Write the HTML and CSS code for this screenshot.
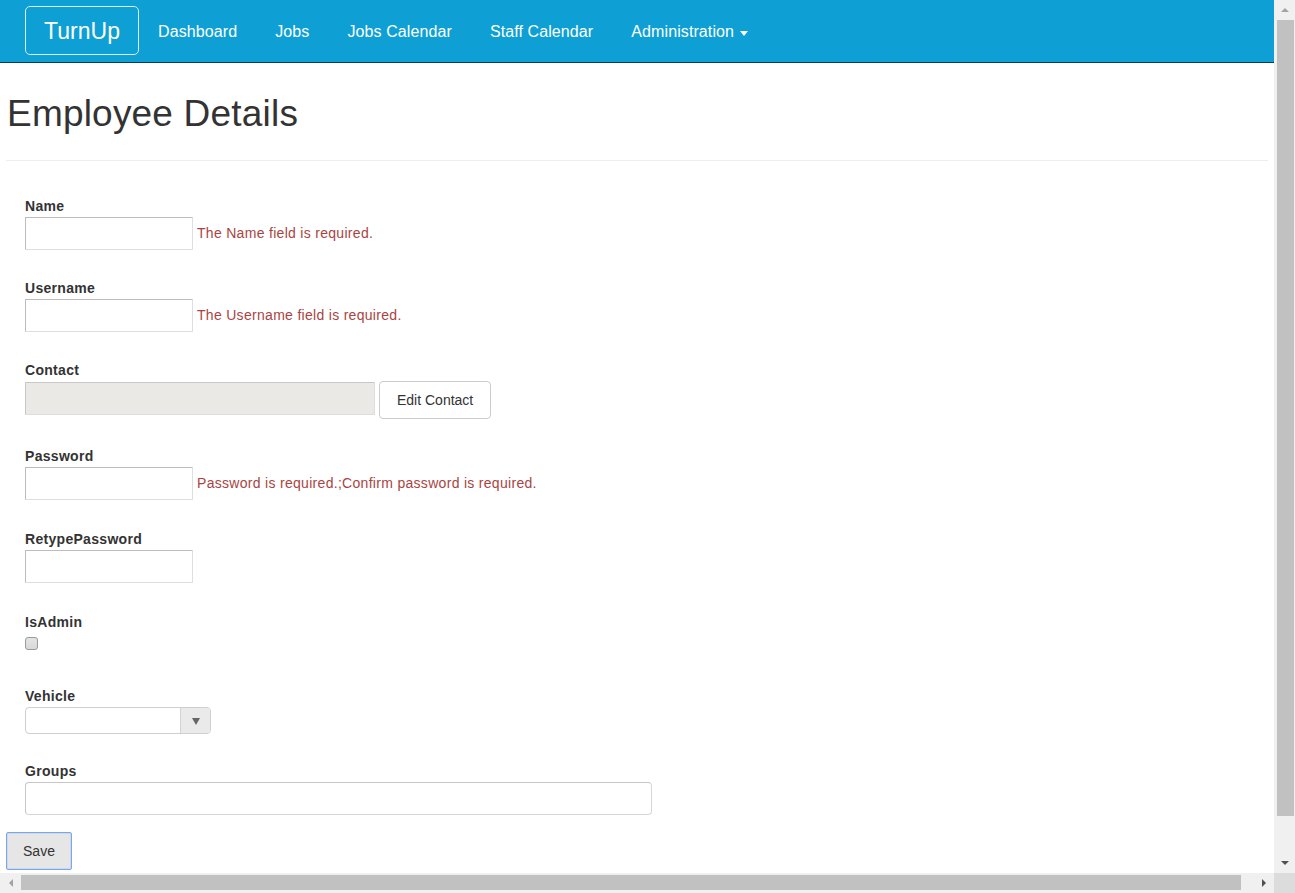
FILE: index.html
```html
<!DOCTYPE html>
<html lang="en">
<head>
<meta charset="utf-8">
<title>Employee Details - TurnUp</title>
<link rel="stylesheet" href="styles.css">
</head>
<body>
<div class="window">
  <div class="viewport">
    <nav class="navbar">
      <a class="brand" href="#">TurnUp</a>
      <ul class="nav-links">
        <li><a href="#">Dashboard</a></li>
        <li><a href="#">Jobs</a></li>
        <li><a href="#">Jobs Calendar</a></li>
        <li><a href="#">Staff Calendar</a></li>
        <li><a href="#">Administration <span class="caret"></span></a></li>
      </ul>
    </nav>
    <main class="container">
      <h1 class="title">Employee Details</h1>
      <hr class="rule">
      <form class="form">
        <div class="group">
          <label class="label">Name</label>
          <div class="field">
            <input class="input input-short" type="text">
            <span class="error">The Name field is required.</span>
          </div>
        </div>
        <div class="group">
          <label class="label">Username</label>
          <div class="field">
            <input class="input input-short" type="text">
            <span class="error">The Username field is required.</span>
          </div>
        </div>
        <div class="group group-contact">
          <label class="label">Contact</label>
          <div class="field field-top">
            <input class="input input-contact" type="text" disabled>
            <button class="btn-edit" type="button">Edit Contact</button>
          </div>
        </div>
        <div class="group group-wide">
          <label class="label">Password</label>
          <div class="field">
            <input class="input input-short" type="password">
            <span class="error">Password is required.;Confirm password is required.</span>
          </div>
        </div>
        <div class="group group-wide">
          <label class="label">RetypePassword</label>
          <div class="field">
            <input class="input input-short" type="password">
          </div>
        </div>
        <div class="group group-check">
          <label class="label">IsAdmin</label>
          <div class="field">
            <input class="checkbox" type="checkbox">
          </div>
        </div>
        <div class="group group-vehicle">
          <label class="label">Vehicle</label>
          <div class="select">
            <span class="select-value"></span>
            <span class="select-arrow"><span class="tri-down"></span></span>
          </div>
        </div>
        <div class="group group-last">
          <label class="label">Groups</label>
          <div class="field">
            <input class="input input-groups" type="text">
          </div>
        </div>
      </form>
      <button class="btn-save" type="button">Save</button>
    </main>
  </div>
  <div class="vscroll">
    <div class="sb-btn"><span class="arr arr-up"></span></div>
    <div class="vthumb-track"><div class="vthumb"></div></div>
    <div class="sb-btn"><span class="arr arr-down"></span></div>
  </div>
  <div class="hscroll">
    <div class="sb-btn-h"><span class="arr arr-left"></span></div>
    <div class="hthumb-track"><div class="hthumb"></div></div>
    <div class="sb-btn-h"><span class="arr arr-right"></span></div>
  </div>
  <div class="corner"></div>
</div>
</body>
</html>
```
FILE: styles.css
```css
* { box-sizing: border-box; }
html, body { margin: 0; padding: 0; height: 100%; }
body {
  font-family: "Liberation Sans", Arial, Helvetica, sans-serif;
  font-size: 14px;
  letter-spacing: 0.3px;
  color: #333;
  background: #fff;
}
.window {
  display: grid;
  grid-template-columns: 1fr 21px;
  grid-template-rows: 1fr 20px;
  height: 100vh;
  overflow: hidden;
}
.viewport {
  overflow: hidden;
  background: #fff;
}

/* navbar */
.navbar {
  display: flex;
  align-items: center;
  height: 63px;
  padding-left: 25px;
  background: #0e9fd4;
  border-bottom: 1px solid #073e57;
}
.brand {
  display: flex;
  align-items: center;
  justify-content: center;
  width: 114px;
  height: 49px;
  margin-top: -1px;
  padding-top: 2px;
  border: 1px solid #d8eef8;
  border-radius: 5px;
  color: #fff;
  font-size: 23px;
  letter-spacing: 0;
  text-decoration: none;
}
.nav-links {
  display: flex;
  list-style: none;
  margin: 0;
  padding: 0;
}
.nav-links a {
  display: flex;
  align-items: center;
  padding: 2px 19px 0;
  color: #fff;
  font-size: 16px;
  letter-spacing: 0.1px;
  text-decoration: none;
}
.caret {
  display: inline-block;
  width: 0;
  height: 0;
  margin-left: 6px;
  margin-top: 2px;
  border-left: 4.5px solid transparent;
  border-right: 4.5px solid transparent;
  border-top: 5px solid #fff;
}

/* content */
.container { padding: 0 6px; }
.title {
  margin: 31px 0 0;
  font-size: 37px;
  font-weight: 400;
  line-height: 1.1;
  letter-spacing: 0.2px;
  color: #333;
  padding-left: 1px;
}
.rule {
  margin: 25px 0 0;
  border: 0;
  border-top: 1px solid #eee;
}
.form {
  padding: 35px 0 0 19px;
}
.group { margin-bottom: 28px; }
.group-contact { margin-bottom: 27px; }
.group-wide { margin-bottom: 29px; }
.group-check { margin-bottom: 36px; }
.group-vehicle { margin-bottom: 27px; }
.group-last { margin-bottom: 17px; }
.label {
  display: block;
  font-weight: 700;
  line-height: 20px;
  margin-bottom: 1px;
}
.field {
  display: flex;
  align-items: center;
  gap: 4px;
}
.field-top { align-items: flex-start; }
.input {
  height: 33px;
  padding: 4px 8px;
  font: inherit;
  border: 1px solid;
  border-color: #bcbcbc #dedede #dedede #bcbcbc;
  background: #fff;
  border-radius: 1px;
}
.input-short { width: 168px; }
.input-contact {
  width: 350px;
  margin-top: 1px;
  background: #ebe9e5;
  border-color: #c8c8c8 #dedede #dedede #c8c8c8;
}
.input-groups {
  width: 627px;
  border-radius: 4px;
  border-color: #c6c6c6 #d6d6d6 #d6d6d6 #c6c6c6;
}
.error {
  color: #a94442;
  font-size: 14px;
}
.btn-edit {
  height: 38px;
  padding: 0 17px;
  font: inherit;
  color: #333;
  background: #fff;
  border: 1px solid #ccc;
  border-radius: 4px;
}
.checkbox {
  appearance: none;
  -webkit-appearance: none;
  width: 13px;
  height: 13px;
  margin: 4px 0 0;
  border: 1px solid #9a9a9a;
  border-radius: 3px;
  background: linear-gradient(#e4e4e4, #d8d8d8);
}
.select {
  display: flex;
  width: 186px;
  height: 27px;
  border: 1px solid #cfcfcf;
  border-radius: 4px;
  overflow: hidden;
  background: #fff;
}
.select-value { flex: 1; }
.select-arrow {
  display: flex;
  align-items: center;
  justify-content: center;
  width: 30px;
  background: #eaeaea;
  border-left: 1px solid #d2d2d2;
}
.tri-down {
  width: 0;
  height: 0;
  margin-top: 2px;
  border-left: 4px solid transparent;
  border-right: 4px solid transparent;
  border-top: 7px solid #666;
}
.btn-save {
  width: 66px;
  height: 38px;
  font: inherit;
  font-size: 14px;
  color: #333;
  background: #e6e6e6;
  border: 1px solid #7fa7df;
  border-radius: 2px;
  box-shadow: inset 0 0 0 1px #c9d9f1;
}

/* scrollbars */
.vscroll {
  display: flex;
  flex-direction: column;
  background: #f0f0f0;
}
.sb-btn {
  height: 20px;
  display: flex;
  align-items: center;
  justify-content: center;
  padding-left: 1px;
}
.vthumb-track {
  flex: 1;
  padding: 0 1px 37px 3px;
}
.vthumb {
  height: 100%;
  background: #c1c1c1;
}
.hscroll {
  display: flex;
  background: #f0f0f0;
}
.sb-btn-h {
  width: 21px;
  display: flex;
  align-items: center;
  justify-content: center;
}
.hthumb-track {
  flex: 1;
  padding: 2px 12px 3px 0;
}
.hthumb {
  height: 100%;
  background: #c1c1c1;
}
.corner { background: #dcdcdc; }
.arr { width: 0; height: 0; display: block; }
.arr-up {
  border-left: 4px solid transparent;
  border-right: 4px solid transparent;
  border-bottom: 4px solid #a3a3a3;
}
.arr-down {
  border-left: 4px solid transparent;
  border-right: 4px solid transparent;
  border-top: 4px solid #505050;
}
.arr-left {
  border-top: 4px solid transparent;
  border-bottom: 4px solid transparent;
  border-right: 4px solid #a3a3a3;
}
.arr-right {
  border-top: 4px solid transparent;
  border-bottom: 4px solid transparent;
  border-left: 4px solid #505050;
}
```
